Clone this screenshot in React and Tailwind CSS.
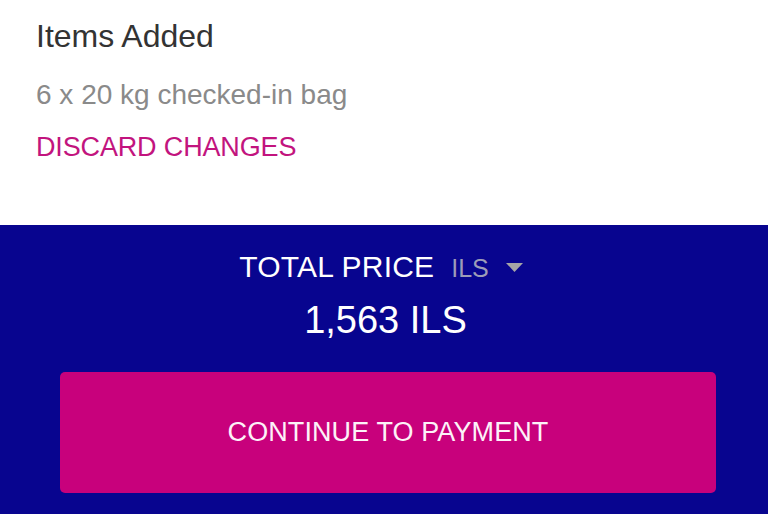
const App = () => {
  return (
    <div className="w-[768px] h-[514px] flex flex-col overflow-hidden font-['Liberation_Sans',Arial,sans-serif]">
      {/* Added items */}
      <div className="h-[225px] bg-white pl-[36px] pt-[20px] flex flex-col">
        <h2 className="text-[32px] leading-[32px] text-[#333333]">Items Added</h2>
        <p className="mt-[29px] text-[28px] leading-[28px] text-[#8a8a8a]">6 x 20 kg checked-in bag</p>
        <button className="mt-[25px] self-start text-[27px] leading-[27px] text-[#c2147e] tracking-[-0.15px]">
          DISCARD CHANGES
        </button>
      </div>

      {/* Total & checkout */}
      <div className="flex-1 bg-[#08058f] pt-[27px] flex flex-col items-center">
        <div className="flex items-baseline -ml-[6px]">
          <span className="text-[30px] leading-[30px] text-white tracking-[0.2px]">TOTAL PRICE</span>
          <span className="ml-[17px] text-[25px] leading-[30px] text-[#9c9cb8]">ILS</span>
          <svg className="ml-[17px] self-center" width="17" height="9" viewBox="0 0 17 9">
            <path d="M0 0 L17 0 L8.5 9 Z" fill="#a6a6a6" />
          </svg>
        </div>
        <div className="mt-[18px] ml-[3px] text-[38px] leading-[38px] text-white">1,563 ILS</div>
        <div className="mt-[33px] self-stretch pl-[60px] pr-[52px]">
          <button className="w-full h-[121px] rounded-[5px] bg-[#c8017c] flex items-center justify-center">
            <span className="text-[27px] text-[#fdf2f8] tracking-[0.1px]">CONTINUE TO PAYMENT</span>
          </button>
        </div>
      </div>
    </div>
  )
}

export default App
